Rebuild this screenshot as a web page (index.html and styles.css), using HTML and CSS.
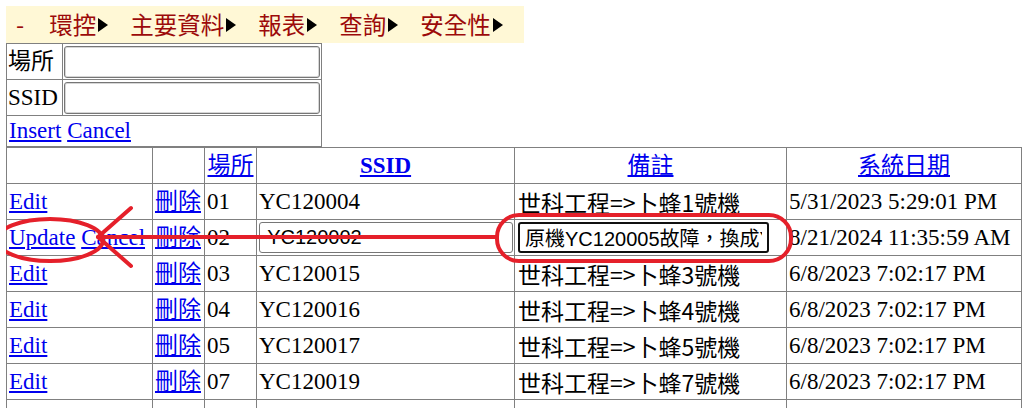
FILE: index.html
```html
<!DOCTYPE html>
<html lang="zh-Hant">
<head>
    <meta charset="UTF-8">
    <title>SSID 維護</title>
    <link rel="stylesheet" href="styles.css">
</head>
<body>
    <div class="menu">
        <span class="dash">-</span>
        <span class="menu-item">環控<i class="arrow"></i></span>
        <span class="menu-item">主要資料<i class="arrow"></i></span>
        <span class="menu-item">報表<i class="arrow"></i></span>
        <span class="menu-item">查詢<i class="arrow"></i></span>
        <span class="menu-item">安全性<i class="arrow"></i></span>
    </div>

    <table class="insert-form">
        <tr>
            <td class="label">場所</td>
            <td><input type="text" class="form-input"></td>
        </tr>
        <tr>
            <td class="label">SSID</td>
            <td><input type="text" class="form-input"></td>
        </tr>
        <tr class="actions">
            <td colspan="2"><a href="#">Insert</a> <a href="#">Cancel</a></td>
        </tr>
    </table>

    <table class="grid">
        <colgroup>
            <col class="c-edit">
            <col class="c-del">
            <col class="c-site">
            <col class="c-ssid">
            <col class="c-note">
            <col class="c-date">
        </colgroup>
        <tr>
            <th></th>
            <th></th>
            <th class="cjk"><a href="#">場所</a></th>
            <th><a href="#">SSID</a></th>
            <th class="cjk"><a href="#">備註</a></th>
            <th class="cjk"><a href="#">系統日期</a></th>
        </tr>
        <tr>
            <td><a href="#">Edit</a></td>
            <td><a href="#">刪除</a></td>
            <td>01</td>
            <td>YC120004</td>
            <td class="note">世科工程=&gt;卜蜂1號機</td>
            <td>5/31/2023 5:29:01 PM</td>
        </tr>
        <tr>
            <td><a href="#">Update</a> <a href="#">Cancel</a></td>
            <td><a href="#">刪除</a></td>
            <td>02</td>
            <td><input type="text" class="edit-input" value=" YC120002"></td>
            <td><input type="text" class="edit-input focused" value="原機YC120005故障，換成YC120002"></td>
            <td>8/21/2024 11:35:59 AM</td>
        </tr>
        <tr>
            <td><a href="#">Edit</a></td>
            <td><a href="#">刪除</a></td>
            <td>03</td>
            <td>YC120015</td>
            <td class="note">世科工程=&gt;卜蜂3號機</td>
            <td>6/8/2023 7:02:17 PM</td>
        </tr>
        <tr>
            <td><a href="#">Edit</a></td>
            <td><a href="#">刪除</a></td>
            <td>04</td>
            <td>YC120016</td>
            <td class="note">世科工程=&gt;卜蜂4號機</td>
            <td>6/8/2023 7:02:17 PM</td>
        </tr>
        <tr>
            <td><a href="#">Edit</a></td>
            <td><a href="#">刪除</a></td>
            <td>05</td>
            <td>YC120017</td>
            <td class="note">世科工程=&gt;卜蜂5號機</td>
            <td>6/8/2023 7:02:17 PM</td>
        </tr>
        <tr>
            <td><a href="#">Edit</a></td>
            <td><a href="#">刪除</a></td>
            <td>07</td>
            <td>YC120019</td>
            <td class="note">世科工程=&gt;卜蜂7號機</td>
            <td>6/8/2023 7:02:17 PM</td>
        </tr>
        <tr class="more">
            <td></td>
            <td></td>
            <td></td>
            <td></td>
            <td></td>
            <td></td>
        </tr>
    </table>

    <!-- red marks drawn on the screenshot -->
    <svg class="marks" width="1032" height="408" viewBox="0 0 1032 408">
        <ellipse cx="50" cy="240" rx="53" ry="21" />
        <path d="M98 237 L497 237" />
        <path d="M131 208 L98 237 L131 266" />
        <rect x="497" y="215" width="294" height="46" rx="22" ry="22" />
    </svg>
</body>
</html>
```

FILE: styles.css
```css
body {
    margin: 6px;
    font-family: "Liberation Serif", "Noto Sans CJK TC", serif;
    font-size: 23px;
    color: #000;
    background: #fff;
    position: relative;
}
a {
    color: #0000ee;
    text-decoration: underline;
}

/* top menu */
.menu {
    width: 518px;
    height: 37px;
    box-sizing: border-box;
    padding-left: 10px;
    background-color: #fff8d6;
    display: flex;
    align-items: center;
    gap: 22px;
    font-family: "Noto Sans CJK TC", sans-serif;
    font-size: 23.5px;
    line-height: 1;
    color: #9c0a0a;
}
.menu .dash {
    margin-right: 3px;
}
.menu-item {
    display: flex;
    align-items: center;
}
.arrow {
    display: inline-block;
    width: 0;
    height: 0;
    margin-left: 2px;
    border-top: 7px solid transparent;
    border-bottom: 7px solid transparent;
    border-left: 10px solid #000;
}

/* insert form */
.insert-form {
    border-collapse: collapse;
    width: 316px;
    line-height: 26px;
}
.insert-form td {
    border: 1px solid #808080;
    padding: 0 1px;
    height: 35px;
    white-space: nowrap;
}
.insert-form .label {
    width: 53px;
}
.insert-form .actions td {
    height: 30px;
    padding-left: 2px;
}
.form-input {
    display: block;
    width: 256px;
    height: 32px;
    box-sizing: border-box;
    border: 1px solid #767676;
    border-radius: 3px;
    box-shadow: inset 0 0 0 1px #d6d6d6;
    font-family: "Liberation Sans", "Noto Sans CJK TC", sans-serif;
    font-size: 20px;
}

/* grid */
.grid {
    border-collapse: collapse;
    table-layout: fixed;
    width: 1015px;
    line-height: 26px;
}
.c-edit { width: 146px; }
.c-del { width: 52px; }
.c-site { width: 52px; }
.c-ssid { width: 258px; }
.c-note { width: 272px; }
.c-date { width: 235px; }
.grid th,
.grid td {
    border: 1px solid #808080;
    height: 35px;
    padding: 0 2px;
    white-space: nowrap;
    overflow: hidden;
    text-align: left;
}
.grid th {
    text-align: center;
    font-weight: bold;
}
.grid th.cjk {
    font-weight: normal;
}
.grid td.note {
    font-family: "Noto Sans CJK TC", "Liberation Serif", sans-serif;
    font-size: 23px;
    padding-left: 3px;
}
.edit-input {
    display: block;
    width: 254px;
    height: 31px;
    box-sizing: border-box;
    padding: 0 2px;
    border: 1px solid #767676;
    border-radius: 3px;
    font-family: "Liberation Sans", "Noto Sans CJK TC", sans-serif;
    font-size: 20px;
    color: #000;
}
.edit-input.focused {
    width: 251px;
    margin-left: 1px;
    padding: 0 5px;
    border: 2px solid #101010;
}

/* annotation overlay */
.marks {
    position: absolute;
    left: -6px;
    top: -6px;
    pointer-events: none;
}
.marks ellipse,
.marks path,
.marks rect {
    fill: none;
    stroke: #e5202a;
    stroke-width: 4;
    stroke-linecap: round;
    stroke-linejoin: round;
}
```
